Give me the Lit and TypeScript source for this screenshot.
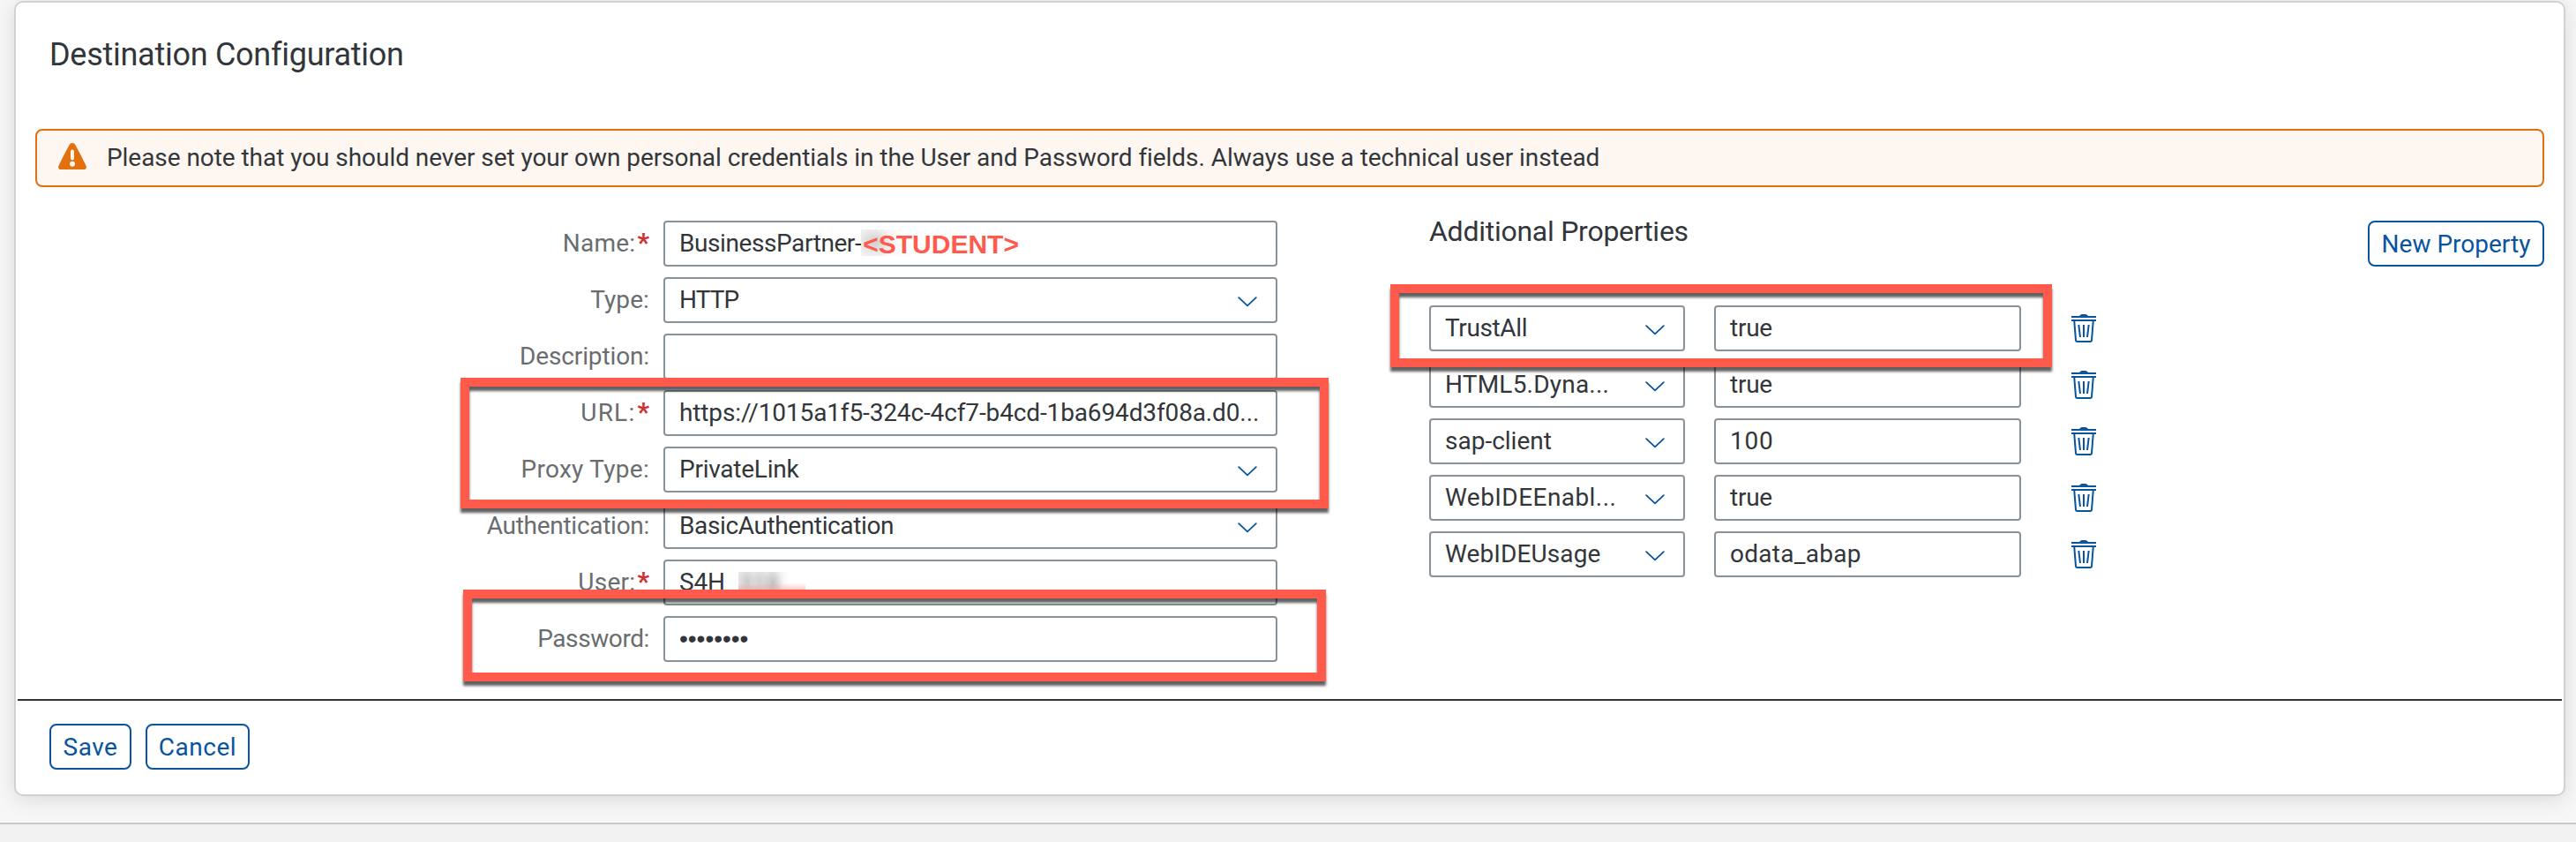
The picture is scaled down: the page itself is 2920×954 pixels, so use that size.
import { LitElement, html, css, svg, nothing } from 'lit';
import { customElement } from 'lit/decorators.js';
import { styleMap } from 'lit/directives/style-map.js';

interface Field {
  label: string;
  labelTrack: number;
  value: string;
  track: number;
  required?: boolean;
  kind?: 'select' | 'student' | 'user' | 'password';
}

interface Property {
  key: string;
  keyTrack: number;
  value: string;
  track: number;
}

const FIELDS: Field[] = [
  { label: 'Name:', labelTrack: 0.25, value: 'BusinessPartner-', track: -0.42, required: true, kind: 'student' },
  { label: 'Type:', labelTrack: 0.11, value: 'HTTP', track: -0.9, kind: 'select' },
  { label: 'Description:', labelTrack: -0.13, value: '', track: 0 },
  { label: 'URL:', labelTrack: 1.2, value: 'https://1015a1f5-324c-4cf7-b4cd-1ba694d3f08a.d0...', track: -0.13, required: true },
  { label: 'Proxy Type:', labelTrack: 0.28, value: 'PrivateLink', track: -0.25, kind: 'select' },
  { label: 'Authentication:', labelTrack: -0.28, value: 'BasicAuthentication', track: -0.38, kind: 'select' },
  { label: 'User:', labelTrack: 0.26, value: 'S4H', track: -0.18, required: true, kind: 'user' },
  { label: 'Password:', labelTrack: -0.4, value: '••••••••', track: 0, kind: 'password' },
];

const PROPERTIES: Property[] = [
  { key: 'TrustAll', keyTrack: -0.37, value: 'true', track: -0.26 },
  { key: 'HTML5.Dyna...', keyTrack: 0.21, value: 'true', track: -0.26 },
  { key: 'sap-client', keyTrack: 0, value: '100', track: 0.76 },
  { key: 'WebIDEEnabl...', keyTrack: 0.44, value: 'true', track: -0.26 },
  { key: 'WebIDEUsage', keyTrack: 0.1, value: 'odata_abap', track: 0.28 },
];

const tracked = (px: number) => styleMap({ letterSpacing: `${px}px` });

const chevron = html`<svg class="chevron" width="22" height="12" viewBox="0 0 22 12">
  ${svg`<path d="M1.2 1.2 L11 10.4 L20.8 1.2" fill="none" stroke="#0854a0" stroke-width="1.8" stroke-linecap="round" stroke-linejoin="round"/>`}
</svg>`;

const trash = html`<svg class="trash" width="28" height="32" viewBox="0 0 28 32">
  ${svg`<g fill="none" stroke="#0854a0">
    <path d="M9 2 Q10.5 0 12 0 H16 Q17.500 0 19 2 Z" fill="#0854a0" stroke="none"/>
    <path d="M0 3 H28 M0 7 H28" stroke-width="2"/>
    <path d="M3.200 7 L5 29.600 Q5.200 31 6.500 31 H21.500 Q22.800 31 23 29.600 L24.800 7" stroke-width="2"/>
    <path d="M8.300 12 L10 26 M14 12 V26 M19.700 12 L18 26" stroke-width="2"/>
  </g>`}
</svg>`;

const warning = html`<svg class="warning" width="32" height="30" viewBox="0 0 32 30">
  ${svg`<path d="M16 0 C17.500 0 18.600 .8 19.300 2 C23 9 28 18 31.400 25.500 C32.600 28 31.500 30 29 30 H3 C.5 30 -.6 28 .6 25.500 C4 18 9 9 12.700 2 C13.400 .8 14.500 0 16 0 Z" fill="#e2700e"/>
    <path d="M16 9.500 V17.500" stroke="#fff6f0" stroke-width="4" stroke-linecap="round"/>
    <circle cx="16" cy="23.800" r="3" fill="#fff6f0"/>`}
</svg>`;

@customElement('app-root')
export class AppRoot extends LitElement {
  static styles = css`
    :host {
      display: flex;
      flex-direction: column;
      height: 954px;
      box-sizing: border-box;
      overflow: hidden;
      background: #f7f7f7;
      color: #32363a;
      font-family: Roboto, sans-serif;
      font-size: 28px;
      white-space: nowrap;
    }
    * { box-sizing: border-box; }
    svg { display: block; flex: none; }

    .page { height: 932px; flex: none; padding: 1px 12px 0 16px; overflow: hidden; }
    .bottom { flex: 1; border-top: 2px solid #c9c9c9; background: #f2f2f2; }
    .card {
      position: relative;
      display: flex;
      flex-direction: column;
      height: 901px;
      background: #fff;
      border: 2px solid #d1d1d1;
      border-radius: 10px;
      box-shadow: 0 4px 24px rgba(0, 0, 0, 0.12);
    }
    h1 { margin: 38px 0 0 38px; font-size: 36px; line-height: 42px; font-weight: 400; letter-spacing: -0.27px; }
    .strip {
      display: flex;
      margin: 63px 22px 0 22px;
      height: 66px;
      padding-left: 24px;
      border: 2px solid #e2700e;
      border-radius: 8px;
      background: #fef6f1;
      line-height: 61px;
      letter-spacing: -0.055px;
    }
    .warning { margin: 14px 23px 0 0; }

    .body { display: flex; height: 549px; margin-top: 31px; padding-right: 22px; }
    .form { display: flex; flex-direction: column; gap: 12px; width: 1430px; padding-top: 7px; }
    .field { display: flex; height: 52px; }
    .label { width: 718px; text-align: right; line-height: 51px; color: #6a6d70; }
    .star { margin-left: 2px; color: #cf3030; font-size: 30px; line-height: 0; font-weight: 700; }
    .box {
      display: flex;
      height: 52px;
      padding: 0 16px;
      border: 2px solid #89919a;
      border-radius: 4px;
      background: #fff;
      line-height: 47px;
    }
    .field .box { width: 696px; margin-left: 16px; }
    .chevron { margin: 20px 5px 0 auto; }
    .dots { font-family: 'Liberation Sans', sans-serif; }
    .smudge { position: relative; width: 0; height: 0; }
    .smudge::before {
      content: '';
      position: absolute;
      left: 0;
      top: 8px;
      width: 66px;
      height: 30px;
      background: radial-gradient(ellipse 24px 20px at 16px 14px, rgba(0, 0, 0, 0.17), rgba(0, 0, 0, 0.05) 62%, rgba(0, 0, 0, 0) 100%), linear-gradient(90deg, #f4f4f4, #fff);
    }
    .student {
      position: relative;
      margin-left: 2px;
      font: 700 30px/49px 'Liberation Sans', sans-serif;
      color: #ff5a4c;
    }
    .mask {
      width: 76px;
      height: 22px;
      margin: 12px 0 0 15px;
      background:
        linear-gradient(180deg, rgba(255, 90, 76, 0) 58%, rgba(255, 90, 76, 0.4) 100%),
        radial-gradient(ellipse 10px 15px at 10px 11px, rgba(0, 0, 0, 0.12), rgba(0, 0, 0, 0)),
        radial-gradient(ellipse 10px 15px at 24px 11px, rgba(0, 0, 0, 0.1), rgba(0, 0, 0, 0)),
        radial-gradient(ellipse 12px 15px at 39px 12px, rgba(0, 0, 0, 0.17), rgba(0, 0, 0, 0)),
        linear-gradient(90deg, #e6e6e6 0, #e8e8e8 52%, #fff 76%);
    }

    .props { flex: 1; padding-left: 172px; }
    .head { display: flex; justify-content: space-between; height: 59px; }
    h2 { margin: 0; font-size: 32px; line-height: 38px; font-weight: 400; letter-spacing: -0.26px; }
    .btn {
      display: block;
      height: 52px;
      padding: 0;
      border: 2px solid #0854a0;
      border-radius: 8px;
      background: #fff;
      color: #0854a0;
      font: 400 28px/47px Roboto, sans-serif;
      text-align: center;
    }
    .new { width: 200px; margin-top: 7px; }
    .rows { display: flex; flex-direction: column; gap: 12px; margin-top: 44px; }
    .row { display: flex; height: 52px; }
    .key { width: 290px; }
    .val { width: 348px; margin-left: 33px; }
    .trash { margin: 10px 0 0 57px; }

    .line { height: 2px; flex: none; margin: 0 2px; background: #32363a; }
    .actions { display: flex; gap: 16px; padding: 26px 38px; }
    .save { width: 93px; letter-spacing: 0.49px; }
    .cancel { width: 118px; letter-spacing: 0.52px; }

    .frame { position: absolute; border: 10px solid #ff5a4c; filter: drop-shadow(0 5px 1.5px rgba(0, 0, 0, 0.62)); }
    .url { left: 504px; top: 425px; width: 984px; height: 148px; }
    .password { left: 507px; top: 665px; width: 978px; height: 104px; }
    .trust { left: 1558px; top: 319px; width: 750px; height: 94px; }
  `;

  private field(f: Field) {
    return html`<div class="field">
      <div class="label"><span style=${tracked(f.labelTrack)}>${f.label}</span>${f.required ? html`<span class="star">*</span>` : nothing}</div>
      <div class="box">
        <span class=${f.kind === 'password' ? 'dots' : 'text'} style=${tracked(f.track)}>${f.value}</span>
        ${f.kind === 'select' ? chevron : nothing}
        ${f.kind === 'student' ? html`<span class="smudge"></span><span class="student">&lt;STUDENT&gt;</span>` : nothing}
        ${f.kind === 'user' ? html`<span class="mask"></span>` : nothing}
      </div>
    </div>`;
  }

  private property(p: Property) {
    return html`<div class="row">
      <div class="box key"><span style=${tracked(p.keyTrack)}>${p.key}</span>${chevron}</div>
      <div class="box val"><span style=${tracked(p.track)}>${p.value}</span></div>
      ${trash}
    </div>`;
  }

  render() {
    return html`
      <div class="page">
        <div class="card">
          <h1>Destination Configuration</h1>
          <div class="strip">${warning}<span>Please note that you should never set your own personal credentials in the User and Password fields. Always use a technical user instead</span></div>
          <div class="body">
            <div class="form">${FIELDS.map((f) => this.field(f))}</div>
            <div class="props">
              <div class="head"><h2>Additional Properties</h2><button class="btn new">New Property</button></div>
              <div class="rows">${PROPERTIES.map((p) => this.property(p))}</div>
            </div>
          </div>
          <div class="line"></div>
          <div class="actions"><button class="btn save">Save</button><button class="btn cancel">Cancel</button></div>
          <div class="frame url"></div>
          <div class="frame password"></div>
          <div class="frame trust"></div>
        </div>
      </div>
      <div class="bottom"></div>
    `;
  }
}
